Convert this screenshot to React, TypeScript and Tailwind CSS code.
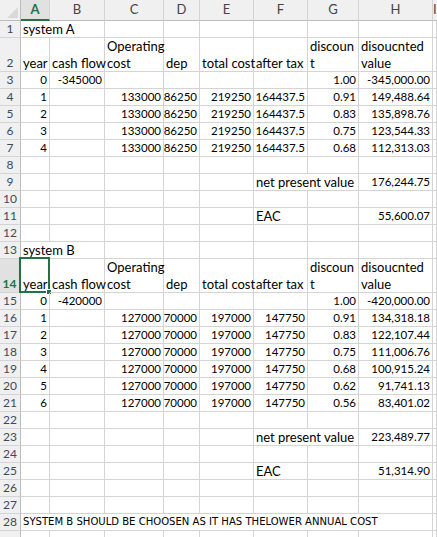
import React from 'react';

type Cell = { t?: string; r?: boolean; over?: number; caps?: boolean; lines?: [string, string] };
type RowDef = { n: number; h: number; c: Record<number, Cell>; noLabel?: boolean };

const COLS = ['A', 'B', 'C', 'D', 'E', 'F', 'G', 'H', 'I'];
const WIDTHS = ['w-[29px]', 'w-[55px]', 'w-[59px]', 'w-[36px]', 'w-[54px]', 'w-[54px]', 'w-[51px]', 'w-[74px]', 'flex-1'];

const num = (t: string): Cell => ({ t, r: true });

const headRow = (n: number): RowDef => ({
  n,
  h: 34,
  c: {
    0: { t: 'year' },
    1: { t: 'cash flow' },
    2: { lines: ['Operating', 'cost'] },
    3: { t: 'dep' },
    4: { t: 'total cost' },
    5: { t: 'after tax' },
    6: { lines: ['discoun', 't'] },
    7: { lines: ['disoucnted', 'value'] },
  },
});

const dataRow = (n: number, y: string, op: string, dep: string, tot: string, tax: string, f: string, v: string): RowDef => ({
  n,
  h: 17,
  c: { 0: num(y), 2: num(op), 3: num(dep), 4: num(tot), 5: num(tax), 6: num(f), 7: num(v) },
});

const empty = (n: number): RowDef => ({ n, h: 17, c: {} });

const ROWS: RowDef[] = [
  { n: 1, h: 17, c: { 0: { t: 'system A', over: 1 } } },
  headRow(2),
  { n: 3, h: 17, c: { 0: num('0'), 1: num('-345000'), 6: num('1.00'), 7: num('-345,000.00') } },
  dataRow(4, '1', '133000', '86250', '219250', '164437.5', '0.91', '149,488.64'),
  dataRow(5, '2', '133000', '86250', '219250', '164437.5', '0.83', '135,898.76'),
  dataRow(6, '3', '133000', '86250', '219250', '164437.5', '0.75', '123,544.33'),
  dataRow(7, '4', '133000', '86250', '219250', '164437.5', '0.68', '112,313.03'),
  empty(8),
  { n: 9, h: 17, c: { 5: { t: 'net present value', over: 1 }, 7: num('176,244.75') } },
  empty(10),
  { n: 11, h: 17, c: { 5: { t: 'EAC' }, 7: num('55,600.07') } },
  empty(12),
  { n: 13, h: 17, c: { 0: { t: 'system B', over: 1 } } },
  headRow(14),
  { n: 15, h: 17, c: { 0: num('0'), 1: num('-420000'), 6: num('1.00'), 7: num('-420,000.00') } },
  dataRow(16, '1', '127000', '70000', '197000', '147750', '0.91', '134,318.18'),
  dataRow(17, '2', '127000', '70000', '197000', '147750', '0.83', '122,107.44'),
  dataRow(18, '3', '127000', '70000', '197000', '147750', '0.75', '111,006.76'),
  dataRow(19, '4', '127000', '70000', '197000', '147750', '0.68', '100,915.24'),
  dataRow(20, '5', '127000', '70000', '197000', '147750', '0.62', '91,741.13'),
  dataRow(21, '6', '127000', '70000', '197000', '147750', '0.56', '83,401.02'),
  empty(22),
  { n: 23, h: 17, c: { 5: { t: 'net present value', over: 1 }, 7: num('223,489.77') } },
  empty(24),
  { n: 25, h: 17, c: { 5: { t: 'EAC' }, 7: num('51,314.90') } },
  empty(26),
  empty(27),
  { n: 28, h: 17, c: { 0: { t: 'SYSTEM B SHOULD BE CHOOSEN AS IT HAS THELOWER ANNUAL COST', over: 7, caps: true } } },
  { n: 29, h: 17, c: {}, noLabel: true },
];

const SEL_ROW = 14;

const SheetRow = ({ row }: { row: RowDef }) => {
  const hidden = new Set<number>();
  Object.entries(row.c).forEach(([k, c]) => {
    for (let i = 0; i < (c.over ?? 0); i++) hidden.add(Number(k) + i);
  });
  const sel = row.n === SEL_ROW;
  return (
    <div className={`flex ${row.h === 34 ? 'h-[34px]' : 'h-[17px]'}`}>
      <div
        className={`w-[21px] shrink-0 flex items-end justify-center border-b border-b-[#d4d4d4] text-[12px] leading-[16px] ${
          sel ? 'bg-[#e1e1e1] text-[#217346] font-bold border-r-2 border-r-[#217346]' : 'bg-[#f0f0f0] text-[#3c4a5c] border-r border-r-[#bcbcbc]'
        }`}
      >
        {row.noLabel ? '' : row.n}
      </div>
      {COLS.map((_, i) => {
        const c = row.c[i];
        return (
          <div
            key={i}
            className={`${WIDTHS[i]} shrink-0 relative flex flex-col justify-end border-b border-[#d4d4d4] ${
              hidden.has(i) ? '' : 'border-r'
            } ${c?.r ? 'items-end pr-[2px]' : 'items-start pl-[2px]'}`}
          >
            {c?.lines ? (
              <>
                <span className="leading-[17px] whitespace-nowrap">{c.lines[0]}</span>
                <span className="leading-[16px] whitespace-nowrap">{c.lines[1]}</span>
              </>
            ) : c?.t ? (
              <span
                className={`leading-[16px] whitespace-nowrap ${
                  c.r
                    ? 'text-[11.5px]'
                    : c.caps
                      ? "text-[11.2px] font-['Liberation_Sans_Narrow','DejaVu_Sans_Condensed',sans-serif]"
                      : ''
                }`}
              >
                {c.t}
              </span>
            ) : null}
            {sel && i === 0 && (
              <div className="absolute -left-[2px] -top-[2px] w-[31px] h-[36px] border-2 border-[#217346] pointer-events-none">
                <div className="absolute -right-[4px] -bottom-[4px] w-[6px] h-[6px] bg-[#217346] border border-white" />
              </div>
            )}
          </div>
        );
      })}
    </div>
  );
};

export default function App() {
  return (
    <div className="w-[437px] h-[537px] overflow-hidden bg-white text-black text-[13px] font-['Lato',sans-serif]">
      <div className="flex h-[21px] bg-[#f0f0f0] text-[#444] text-[13px]">
        <div className="w-[21px] shrink-0 relative border-r border-b border-[#bcbcbc]">
          <div className="absolute right-[2px] bottom-[2px] w-0 h-0 border-l-[11px] border-l-transparent border-b-[11px] border-b-[#d9d9d9]" />
        </div>
        {COLS.map((col, i) => (
          <div
            key={col}
            className={`${WIDTHS[i]} shrink-0 flex items-center justify-center border-r border-r-[#d4d4d4] ${
              i === 0 ? 'bg-[#e1e1e1] text-[#217346] font-bold border-b-2 border-b-[#217346]' : 'border-b border-b-[#bcbcbc]'
            }`}
          >
            {col}
          </div>
        ))}
      </div>
      {ROWS.map((r) => (
        <SheetRow key={r.n} row={r} />
      ))}
    </div>
  );
}
